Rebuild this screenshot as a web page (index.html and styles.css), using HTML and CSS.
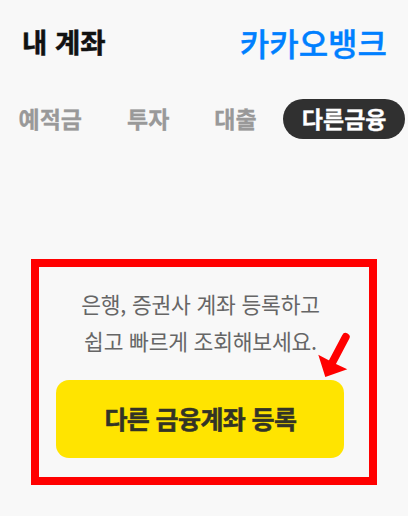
FILE: index.html
```html
<!DOCTYPE html>
<html lang="ko">
<head>
  <meta charset="UTF-8" />
  <meta name="viewport" content="width=device-width, initial-scale=1.0"/>
  <title>내 계좌</title>
  <link rel="stylesheet" href="styles.css">
</head>
<body>

  <!-- Header -->
  <header class="header">
    <h1>내 계좌</h1>
    <div class="brand">카카오뱅크</div>
  </header>

  <!-- Tabs -->
  <nav class="tabs">
    <a class="tab">예적금</a>
    <a class="tab">투자</a>
    <a class="tab">대출</a>
    <a class="tab active">다른금융</a>
  </nav>

  <!-- Register other accounts -->
  <section class="register">
    <p>은행, 증권사 계좌 등록하고<br>쉽고 빠르게 조회해보세요.</p>
    <button class="register-btn">다른 금융계좌 등록</button>
    <svg class="arrow" width="34" height="46" viewBox="0 0 34 46">
      <line x1="28.7" y1="6" x2="15" y2="32" stroke="#ff0000" stroke-width="8" stroke-linecap="round"/>
      <path d="M8.3 46 L1.3 23.7 L15 31 L19 33 L30.3 38.3 Z" fill="#ff0000"/>
    </svg>
  </section>

</body>
</html>
```

FILE: styles.css
```css
body {
  font-family: "Noto Sans CJK KR", "Noto Sans", sans-serif;
  background: #f8f8f8;
  margin: 0;
  height: 516px;
  overflow: hidden;
}

.header {
  display: flex;
  justify-content: space-between;
  align-items: center;
  height: 84px;
  padding: 0 21px 0 22px;
}

h1 {
  margin: 0;
  padding-bottom: 3px;
  font-size: 27.5px;
  font-weight: 700;
  color: #111;
  -webkit-text-stroke: 0.5px #111;
}

.brand {
  font-size: 32px;
  font-weight: 500;
  color: #0080ff;
  -webkit-text-stroke: 0.4px #0080ff;
}

.tabs {
  display: flex;
  margin-top: 15px;
  padding-left: 18.5px;
  height: 40px;
  line-height: 38px;
}

.tab {
  margin-right: 45px;
  font-size: 23px;
  font-weight: 700;
  color: #999;
  white-space: nowrap;
  -webkit-text-stroke: 0.3px;
}

.tab.active {
  width: 122px;
  margin: 0 0 0 -18.5px;
  border-radius: 20px;
  background-color: #303030;
  color: white;
  text-align: center;
}

.register {
  position: relative;
  box-sizing: border-box;
  width: 346px;
  height: 226px;
  margin: 120px 0 0 31px;
  padding-top: 18px;
  border: 8px solid #ff0000;
}

.register p {
  margin: 0 0 21px;
  font-size: 21.5px;
  line-height: 37px;
  letter-spacing: -0.2px;
  color: #666;
  text-align: center;
  white-space: nowrap;
  padding-right: 7px;
}

.register-btn {
  display: block;
  width: 288px;
  height: 78px;
  margin-left: 17.4px;
  padding: 0 0 2px;
  border: none;
  border-radius: 13px;
  background-color: #ffe400;
  font-family: inherit;
  font-size: 25px;
  font-weight: 700;
  letter-spacing: -0.6px;
  color: #333326;
  -webkit-text-stroke: 0.5px #333326;
}

.arrow {
  position: absolute;
  left: 278px;
  top: 64px;
}
```
